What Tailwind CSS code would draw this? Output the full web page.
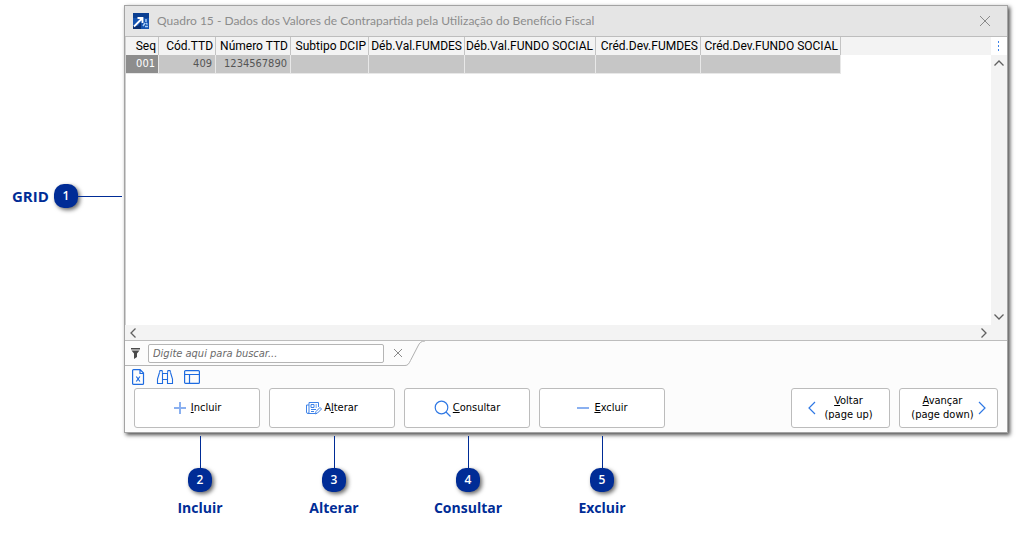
<!DOCTYPE html>
<html lang="pt-BR">

<head>
    <meta charset="UTF-8" />
    <meta name="viewport" content="width=device-width, initial-scale=1.0" />
    <script src="https://cdn.jsdelivr.net/npm/@tailwindcss/browser@4"></script>
    <title>Quadro 15</title>
</head>

<body class="bg-white text-black font-['Open_Sans',sans-serif]">

    <main class="flex flex-col">
        <div class="flex pt-[5px] pr-[23px]">
            <!-- grid callout -->
            <div class="w-[124px] shrink-0 pl-3 pr-[2px] pt-[179px]">
                <div class="flex items-center h-6">
                    <span class="w-[42px] text-[15px] leading-6 font-bold text-[#002c96]">GRID</span>
                    <span class="size-6 shrink-0 rounded-[10px] bg-[#002c96] text-white text-xs leading-6 font-semibold text-center shadow-[2px_2px_4px_rgba(0,0,0,0.6)]">1</span>
                    <span class="flex-1 h-px bg-[#002c96]"></span>
                </div>
            </div>

            <!-- window -->
            <section class="flex-1 min-w-0 border border-[#a3a3a3] bg-[#fcfcfc] shadow-[2px_2px_4px_rgba(0,0,0,0.7)]">
                <header class="flex items-center h-[31px] pl-2 pr-4 bg-[#e5e5e5] border-b border-[#bdbdbd]">
                    <svg class="size-4" viewBox="0 0 16 16" fill="none">
                        <rect width="16" height="16" fill="#1553b0" />
                        <path d="M0 0h16v5H0z" fill="#0a3f92" />
                        <path d="M0 13h5l3-4v7H0z" fill="#0a2f70" />
                        <path d="M1 13.500l7.500-7.500M4.500 5h5v5" stroke="#fff" stroke-width="1.800" />
                        <path d="M13 6v3M10 13l2-3M12 13.500h3M13 10l1.500 1.500" stroke="#a9cdf5" stroke-width="1.500" />
                    </svg>
                    <h1 class="flex-1 pl-2 font-['Lato',sans-serif] text-xs text-[#8c8c8c]">Quadro 15 - Dados dos Valores de Contrapartida pela Utilização do Benefício Fiscal</h1>
                    <button type="button" aria-label="Fechar">
                        <svg class="size-3" viewBox="0 0 12 12" fill="none" stroke="#8a8a8a">
                            <path d="M1 1l10 10M11 1L1 11" />
                        </svg>
                    </button>
                </header>

                <div class="flex bg-white border-l border-[#d0d0d0] min-h-[288px]">
                    <div class="flex-1 flex flex-col">
                        <table class="w-full table-fixed border-separate border-spacing-0 whitespace-nowrap text-right">
                            <colgroup>
                                <col class="w-[33px]">
                                <col class="w-[57px]">
                                <col class="w-[75px]">
                                <col class="w-[78px]">
                                <col class="w-[96px]">
                                <col class="w-[131px]">
                                <col class="w-[105px]">
                                <col class="w-[140px]">
                                <col>
                            </colgroup>
                            <thead class="bg-[#f3f3f3] font-['Roboto',sans-serif] text-xs leading-[18px]">
                                <tr class="h-[18px]">
                                    <th class="border-r border-[#c4c4c4] pr-[2px] font-normal">Seq</th>
                                    <th class="border-r border-[#c4c4c4] pr-[2px] font-normal">Cód.TTD</th>
                                    <th class="border-r border-[#c4c4c4] pr-[2px] font-normal">Número TTD</th>
                                    <th class="border-r border-[#c4c4c4] pr-[2px] font-normal">Subtipo DCIP</th>
                                    <th class="border-r border-[#c4c4c4] pr-[2px] font-normal">Déb.Val.FUMDES</th>
                                    <th class="border-r border-[#c4c4c4] pr-[2px] font-normal">Déb.Val.FUNDO SOCIAL</th>
                                    <th class="border-r border-[#c4c4c4] pr-[2px] font-normal">Créd.Dev.FUMDES</th>
                                    <th class="border-r border-[#c4c4c4] pr-[2px] font-normal">Créd.Dev.FUNDO SOCIAL</th>
                                    <td></td>
                                </tr>
                            </thead>
                            <tbody class="font-['DejaVu_Sans_Condensed','DejaVu_Sans',sans-serif] text-[11px] leading-[18px] text-[#555]">
                                <tr class="h-[19px]">
                                    <td class="border-r border-b border-[#e8e8e8] bg-[#8d8d8d] pr-[3px] text-white">001</td>
                                    <td class="border-r border-b border-[#e8e8e8] bg-[#c6c6c6] pr-[3px]">409</td>
                                    <td class="border-r border-b border-[#e8e8e8] bg-[#c6c6c6] pr-[3px]">1234567890</td>
                                    <td class="border-r border-b border-[#e8e8e8] bg-[#c6c6c6]"></td>
                                    <td class="border-r border-b border-[#e8e8e8] bg-[#c6c6c6]"></td>
                                    <td class="border-r border-b border-[#e8e8e8] bg-[#c6c6c6]"></td>
                                    <td class="border-r border-b border-[#e8e8e8] bg-[#c6c6c6]"></td>
                                    <td class="border-r border-b border-[#e8e8e8] bg-[#c6c6c6]"></td>
                                    <td></td>
                                </tr>
                            </tbody>
                        </table>
                    </div>
                    <div class="w-4 flex flex-col bg-[#f3f3f3]">
                        <button type="button" aria-label="Opções" class="h-[18px] bg-white flex justify-center items-center">
                            <svg class="w-1 h-3" viewBox="0 0 4 12" fill="#3f83e8">
                                <path d="M1 1h1v2H1zM1 5h1v2H1zM1 9h1v2H1z" />
                            </svg>
                        </button>
                        <button type="button" aria-label="Rolar para cima" class="h-4 flex justify-center items-center">
                            <svg class="w-[10px] h-[6px]" viewBox="0 0 10 6" fill="none" stroke="#606060" stroke-width="1.3">
                                <path d="M.5 5.500L5 1l4.500 4.500" />
                            </svg>
                        </button>
                        <span class="flex-1"></span>
                        <button type="button" aria-label="Rolar para baixo" class="h-4 flex justify-center items-center">
                            <svg class="w-[10px] h-[6px]" viewBox="0 0 10 6" fill="none" stroke="#606060" stroke-width="1.3">
                                <path d="M.5 .5L5 5 9.500 .5" />
                            </svg>
                        </button>
                    </div>
                </div>

                <!-- horizontal scroll -->
                <div class="flex justify-between items-center h-4 pl-1 pr-[19px] bg-[#f3f3f3] border-b border-[#bdbdbd]">
                    <button type="button" aria-label="Rolar para a esquerda" class="w-2">
                        <svg class="w-[6px] h-[10px] mx-auto" viewBox="0 0 6 10" fill="none" stroke="#606060" stroke-width="1.3">
                            <path d="M5.500 .5L1 5l4.500 4.500" />
                        </svg>
                    </button>
                    <button type="button" aria-label="Rolar para a direita" class="w-2">
                        <svg class="w-[6px] h-[10px] mx-auto" viewBox="0 0 6 10" fill="none" stroke="#606060" stroke-width="1.3">
                            <path d="M.5 .5L5 5 .5 9.500" />
                        </svg>
                    </button>
                </div>

                <!-- search -->
                <form class="flex h-[25px]">
                    <div class="flex items-center w-[280px] pl-1 border-b border-[#b5b5b5]">
                        <label for="busca" class="w-[19px] pl-[2px]">
                            <svg class="w-[9px] h-[11px]" viewBox="0 0 9 11" fill="#4a4a4a" role="img" aria-label="Filtro">
                                <path d="M0 0h9v1.500H0zM.5 2.500h8L6 5.500V9l-3 2V5.500z" />
                            </svg>
                        </label>
                        <input type="text" id="busca" placeholder="Digite aqui para buscar..."
                            class="w-[236px] h-[19px] px-1 bg-white border border-[#b5b5b5] rounded-[2px] font-['DejaVu_Sans_Condensed','DejaVu_Sans',sans-serif] text-[11px] italic placeholder:text-[#6a6a6a] focus:outline-none">
                        <button type="reset" aria-label="Limpar" class="ml-[9px]">
                            <svg class="size-[10px]" viewBox="0 0 10 10" fill="none" stroke="#8a8a8a">
                                <path d="M1 1l8 8M9 1L1 9" />
                            </svg>
                        </button>
                    </div>
                    <svg class="w-5 h-[25px]" viewBox="0 0 20 25" fill="none" stroke="#b0b0b0">
                        <path d="M0 24.500c3 0 4-2 5.500-5L13 5c1.500-3 3-5 7-5" />
                    </svg>
                </form>

                <div class="flex items-center gap-[10px] h-[22px] pl-[6px]">
                    <button type="button" aria-label="Exportar para Excel">
                        <svg class="w-[15px] h-4" viewBox="0 0 15 16" fill="none" stroke="#1d6be0" stroke-width="1.200">
                            <path d="M1.600 1.600Q1.600 .6 2.600 .6h6.500l3.400 3.400v10.400q0 1-1 1H2.600q-1 0-1-1zM9 .6V4.500h3.500" />
                            <path d="M5.300 7.500l3.600 5M8.900 7.500l-3.600 5" />
                        </svg>
                    </button>
                    <button type="button" aria-label="Localizar">
                        <svg class="w-[18px] h-4" viewBox="0 0 18 16" fill="none" stroke="#1d6be0" stroke-width="1.100">
                            <path d="M3.500 3.500L1.500 10v4.500h5V3.500M14.500 3.500l2 6.500v4.500h-5V3.500" />
                            <path d="M3.500 3.500l.5-2h2l.5 2M14.500 3.500l-.5-2h-2l-.5 2M6.500 4.500h5M6.500 10.500h5" />
                        </svg>
                    </button>
                    <button type="button" aria-label="Layout">
                        <svg class="w-[16px] h-4" viewBox="0 0 16 16" fill="none" stroke="#1d6be0" stroke-width="1.200">
                            <rect x=".6" y="1.600" width="14.800" height="12.800" rx="1" />
                            <path d="M.6 5.500h14.800M5.500 5.500v9" />
                        </svg>
                    </button>
                </div>

                <!-- actions -->
                <div class="flex gap-[9px] pl-[9px] pr-[9px] pb-1 font-['DejaVu_Sans_Condensed','DejaVu_Sans',sans-serif] text-[11px] leading-[14px]">
                    <button type="button" class="flex items-center justify-center gap-1 w-[126px] h-10 bg-white border border-[#bcbcbc] rounded-[3px]">
                        <svg class="size-[14px]" viewBox="0 0 14 14" stroke="#8ab0f0" stroke-width="2">
                            <path d="M7 1v12M1 7h12" />
                        </svg>
                        <span><u>I</u>ncluir</span>
                    </button>
                    <button type="button" class="flex items-center justify-center gap-[2px] w-[126px] h-10 bg-white border border-[#bcbcbc] rounded-[3px]">
                        <svg class="w-4 h-[14px]" viewBox="0 0 16 14" fill="none" stroke="#3f83e8">
                            <path d="M9 12.500H2q-1.500 0-1.500-1.500V4H3M3 11V1.500h9.500V6M3 11q0 1.500-1 1.500M5 3.500h3v3H5zM9.500 4H11M9.500 6H11M5 8.500h5M5 10.500h3" />
                            <path d="M9.500 13l.5-2.500L14 6.500l1.500 1.500-4 4z" fill="#fff" />
                        </svg>
                        <span>A<u>l</u>terar</span>
                    </button>
                    <button type="button" class="flex items-center justify-center gap-[2px] w-[126px] h-10 bg-white border border-[#bcbcbc] rounded-[3px]">
                        <svg class="size-[17px]" viewBox="0 0 17 17" fill="none" stroke="#2f78e4" stroke-width="1.200">
                            <circle cx="7.500" cy="7.500" r="6.300" />
                            <path d="M12 12l4.500 4.500" />
                        </svg>
                        <span><u>C</u>onsultar</span>
                    </button>
                    <button type="button" class="flex items-center justify-center gap-1 w-[126px] h-10 bg-white border border-[#bcbcbc] rounded-[3px]">
                        <svg class="size-[14px]" viewBox="0 0 14 14" stroke="#8ab0f0" stroke-width="2">
                            <path d="M1 7h12" />
                        </svg>
                        <span><u>E</u>xcluir</span>
                    </button>
                    <button type="button" class="ml-auto flex items-center justify-center gap-2 w-[99px] h-10 bg-white border border-[#bcbcbc] rounded-[3px]">
                        <svg class="w-2 h-[14px]" viewBox="0 0 8 14" fill="none" stroke="#2f78e4" stroke-width="1.200">
                            <path d="M7 1L1 7l6 6" />
                        </svg>
                        <span><u>V</u>oltar<br>(page up)</span>
                    </button>
                    <button type="button" class="flex items-center justify-center gap-1 w-[99px] h-10 bg-white border border-[#bcbcbc] rounded-[3px]">
                        <span><u>A</u>vançar<br>(page down)</span>
                        <svg class="w-2 h-[14px]" viewBox="0 0 8 14" fill="none" stroke="#2f78e4" stroke-width="1.200">
                            <path d="M1 1l6 6-6 6" />
                        </svg>
                    </button>
                </div>
            </section>
        </div>

        <!-- button callouts -->
        <ul class="flex pl-[133px] pt-[3px] text-[#002c96]">
            <li class="w-[134px] flex flex-col items-center">
                <span class="w-px h-8 bg-[#002c96]"></span>
                <span class="size-6 rounded-[10px] bg-[#002c96] text-white text-xs leading-6 font-semibold text-center shadow-[2px_2px_4px_rgba(0,0,0,0.6)]">2</span>
                <span class="pt-1 text-sm leading-6 font-bold">Incluir</span>
            </li>
            <li class="w-[134px] flex flex-col items-center">
                <span class="w-px h-8 bg-[#002c96]"></span>
                <span class="size-6 rounded-[10px] bg-[#002c96] text-white text-xs leading-6 font-semibold text-center shadow-[2px_2px_4px_rgba(0,0,0,0.6)]">3</span>
                <span class="pt-1 text-sm leading-6 font-bold">Alterar</span>
            </li>
            <li class="w-[134px] flex flex-col items-center">
                <span class="w-px h-8 bg-[#002c96]"></span>
                <span class="size-6 rounded-[10px] bg-[#002c96] text-white text-xs leading-6 font-semibold text-center shadow-[2px_2px_4px_rgba(0,0,0,0.6)]">4</span>
                <span class="pt-1 text-sm leading-6 font-bold">Consultar</span>
            </li>
            <li class="w-[134px] flex flex-col items-center">
                <span class="w-px h-8 bg-[#002c96]"></span>
                <span class="size-6 rounded-[10px] bg-[#002c96] text-white text-xs leading-6 font-semibold text-center shadow-[2px_2px_4px_rgba(0,0,0,0.6)]">5</span>
                <span class="pt-1 text-sm leading-6 font-bold">Excluir</span>
            </li>
        </ul>
    </main>

</body>

</html>
